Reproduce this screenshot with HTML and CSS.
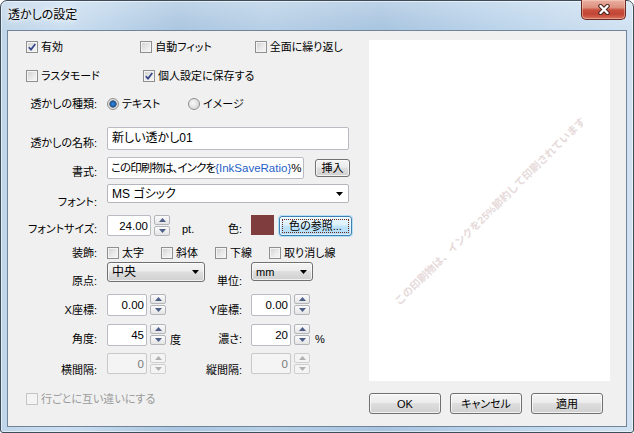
FILE: index.html
```html
<!DOCTYPE html>
<html lang="ja">
<head>
<meta charset="utf-8">
<title>透かしの設定</title>
<link rel="stylesheet" href="styles.css">
</head>
<body>
<div class="window">
  <div class="titlebar">
    <span class="title">透かしの設定</span>
    <div class="close">
      <svg width="14" height="11" viewBox="0 0 14 11"><path class="x-out" d="M3.5 2L10.5 9M10.5 2L3.5 9"/><path class="x-in" d="M3.5 2L10.5 9M10.5 2L3.5 9"/></svg>
    </div>
  </div>
  <div class="client">
    <div class="form">
      <div class="row r-a checks">
        <div class="cb"><span class="box"><svg width="10" height="10" viewBox="0 0 10 10"><path class="tick" d="M1.8 5.2L4 7.6L8.3 1.9"/></svg></span>有効</div>
        <div class="cb"><span class="box"></span>自動フィット</div>
        <div class="cb"><span class="box"></span>全面に繰り返し</div>
      </div>
      <div class="row r-b checks">
        <div class="cb"><span class="box"></span>ラスタモード</div>
        <div class="cb"><span class="box"><svg width="10" height="10" viewBox="0 0 10 10"><path class="tick" d="M1.8 5.2L4 7.6L8.3 1.9"/></svg></span>個人設定に保存する</div>
      </div>
      <div class="row r-c mid">
        <span class="lbl">透かしの種類:</span>
        <div class="rb first"><span class="rad on"></span>テキスト</div>
        <div class="rb"><span class="rad"></span>イメージ</div>
      </div>
      <div class="row r-name">
        <span class="lbl end">透かしの名称:</span>
        <div class="edit name">新しい透かし01</div>
      </div>
      <div class="row r-fmt">
        <span class="lbl end">書式:</span>
        <div class="edit fmt"><span class="jp">この印刷物は、インクを</span><span class="var">{InkSaveRatio}</span>%</div>
        <div class="btn ins">挿入</div>
      </div>
      <div class="row r-font">
        <span class="lbl end">フォント:</span>
        <div class="combo">MS ゴシック<svg class="arr" width="7" height="4" viewBox="0 0 7 4"><path d="M0 0H7L3.5 4Z"/></svg></div>
      </div>
      <div class="row r-size">
        <span class="lbl end">フォントサイズ:</span>
        <div class="larea">
          <div class="spin wide">
            <div class="sv">24.00</div>
            <div class="sbs"><div class="sb"><svg width="7" height="4" viewBox="0 0 7 4"><path d="M0 4H7L3.5 0Z"/></svg></div><div class="sb"><svg width="7" height="4" viewBox="0 0 7 4"><path d="M0 0H7L3.5 4Z"/></svg></div></div>
          </div>
          <span class="unit pt">pt.</span>
        </div>
        <span class="rlbl end">色:</span>
        <div class="swatch"></div>
        <div class="btn focus"><span class="focusin">色の参照...</span></div>
      </div>
      <div class="row r-deco mid">
        <span class="lbl">装飾:</span>
        <div class="cb deco"><span class="box"></span>太字</div>
        <div class="cb deco"><span class="box"></span>斜体</div>
        <div class="cb deco"><span class="box"></span>下線</div>
        <div class="cb deco"><span class="box"></span>取り消し線</div>
      </div>
      <div class="row r-origin">
        <span class="lbl end">原点:</span>
        <div class="ddl origin">中央<svg class="arr" width="7" height="4" viewBox="0 0 7 4"><path d="M0 0H7L3.5 4Z"/></svg></div>
        <span class="rlbl end">単位:</span>
        <div class="ddl mm">mm<svg class="arr" width="7" height="4" viewBox="0 0 7 4"><path d="M0 0H7L3.5 4Z"/></svg></div>
      </div>
      <div class="row r-xy">
        <span class="lbl end">X座標:</span>
        <div class="larea">
          <div class="spin">
            <div class="sv">0.00</div>
            <div class="sbs"><div class="sb"><svg width="7" height="4" viewBox="0 0 7 4"><path d="M0 4H7L3.5 0Z"/></svg></div><div class="sb"><svg width="7" height="4" viewBox="0 0 7 4"><path d="M0 0H7L3.5 4Z"/></svg></div></div>
          </div>
        </div>
        <span class="rlbl end">Y座標:</span>
        <div class="spin">
          <div class="sv">0.00</div>
          <div class="sbs"><div class="sb"><svg width="7" height="4" viewBox="0 0 7 4"><path d="M0 4H7L3.5 0Z"/></svg></div><div class="sb"><svg width="7" height="4" viewBox="0 0 7 4"><path d="M0 0H7L3.5 4Z"/></svg></div></div>
        </div>
      </div>
      <div class="row r-angle">
        <span class="lbl end">角度:</span>
        <div class="larea">
          <div class="spin">
            <div class="sv">45</div>
            <div class="sbs"><div class="sb"><svg width="7" height="4" viewBox="0 0 7 4"><path d="M0 4H7L3.5 0Z"/></svg></div><div class="sb"><svg width="7" height="4" viewBox="0 0 7 4"><path d="M0 0H7L3.5 4Z"/></svg></div></div>
          </div>
          <span class="unit deg">度</span>
        </div>
        <span class="rlbl end">濃さ:</span>
        <div class="spin">
          <div class="sv">20</div>
          <div class="sbs"><div class="sb"><svg width="7" height="4" viewBox="0 0 7 4"><path d="M0 4H7L3.5 0Z"/></svg></div><div class="sb"><svg width="7" height="4" viewBox="0 0 7 4"><path d="M0 0H7L3.5 4Z"/></svg></div></div>
        </div>
        <span class="unit pct">%</span>
      </div>
      <div class="row r-gap">
        <span class="lbl end">横間隔:</span>
        <div class="larea">
          <div class="spin off">
            <div class="sv">0</div>
            <div class="sbs"><div class="sb"><svg width="7" height="4" viewBox="0 0 7 4"><path d="M0 4H7L3.5 0Z"/></svg></div><div class="sb"><svg width="7" height="4" viewBox="0 0 7 4"><path d="M0 0H7L3.5 4Z"/></svg></div></div>
          </div>
        </div>
        <span class="rlbl end">縦間隔:</span>
        <div class="spin off">
          <div class="sv">0</div>
          <div class="sbs"><div class="sb"><svg width="7" height="4" viewBox="0 0 7 4"><path d="M0 4H7L3.5 0Z"/></svg></div><div class="sb"><svg width="7" height="4" viewBox="0 0 7 4"><path d="M0 0H7L3.5 4Z"/></svg></div></div>
        </div>
      </div>
      <div class="row r-stag checks">
        <div class="cb off"><span class="box"></span>行ごとに互い違いにする</div>
      </div>
    </div>
    <div class="side">
      <div class="preview">
        <span class="wm">この印刷物は、インクを25%節約して印刷されています</span>
      </div>
      <div class="buttons">
        <div class="btn big">OK</div>
        <div class="btn big">キャンセル</div>
        <div class="btn big">適用</div>
      </div>
    </div>
  </div>
</div>
</body>
</html>
```
FILE: styles.css
```css
* { box-sizing: border-box; }
html, body { margin: 0; padding: 0; }
body {
  width: 634px; height: 433px; overflow: hidden; background: #fff;
  font-family: "Liberation Sans", "Noto Sans CJK JP", sans-serif;
  font-size: 11px; line-height: 14px; color: #000;
  font-feature-settings: "palt";
}
.window {
  width: 634px; height: 433px;
  border: 1px solid #3e4c5a; border-radius: 7px 7px 3px 3px;
  background:
    linear-gradient(180deg, rgba(255,255,255,0.25) 0, rgba(255,255,255,0) 30px),
    linear-gradient(90deg, #bfd5e9 0%, #cadef0 10%, #aac6e0 28%, #b6cfe6 42%, #a7c4df 60%, #bad3ea 78%, #d0e2f2 100%);
  box-shadow: inset 0 0 0 1px rgba(255,255,255,0.55);
  display: flex; flex-direction: column;
}
.titlebar { height: 29px; display: flex; align-items: center; padding-left: 7px; flex-shrink: 0; }
.title {
  font-family: "Noto Sans CJK JP", sans-serif; font-size: 12px; line-height: 16px;
  margin-top: -3px;
  text-shadow: 0 0 5px #fff, 0 0 9px rgba(255,255,255,0.9);
}
.close {
  align-self: flex-start; margin: -1px 7px 0 auto; width: 45px; height: 20px;
  border: 1px solid #6a2b24; border-top: none; border-radius: 0 0 5px 5px;
  background: linear-gradient(180deg, #eab1a3 0%, #dd8f7d 40%, #c9503f 52%, #c24535 75%, #d9735d 100%);
  box-shadow: inset 0 0 0 1px rgba(255,215,200,0.45);
  display: flex; align-items: center; justify-content: center;
}
.x-out { stroke: #4b2621; stroke-width: 4.4; fill: none; stroke-linecap: round; }
.x-in { stroke: #fff; stroke-width: 2.4; fill: none; stroke-linecap: round; }

.client {
  margin: 0 6px; height: 397px; flex-shrink: 0;
  border: 1px solid #72849a; background: #f0f0f0; display: flex;
}
.form { width: 361px; flex-shrink: 0; display: flex; flex-direction: column; padding-left: 19px; }
.side { width: 241px; flex-shrink: 0; padding-top: 9px; display: flex; flex-direction: column; }

.row { display: flex; align-items: flex-start; flex-shrink: 0; }
.row.mid { align-items: center; }
.end { align-self: flex-end; }
.lbl { width: 70px; margin-right: 10px; display: flex; justify-content: flex-end; white-space: nowrap; flex-shrink: 0; }
.rlbl { width: 37px; margin-right: 9px; display: flex; justify-content: flex-end; white-space: nowrap; flex-shrink: 0; }
.larea { width: 98px; align-self: stretch; display: flex; align-items: flex-start; flex-shrink: 0; }

.r-a { margin-top: 9px; height: 14px; align-items: center; }
.r-b { margin-top: 15px; height: 14px; align-items: center; }
.r-c { margin-top: 14px; height: 14px; }
.r-name { margin-top: 16px; height: 23px; }
.r-fmt { margin-top: 7px; height: 22px; }
.r-font { margin-top: 5px; height: 25px; }
.r-size { margin-top: 6px; height: 21px; }
.r-deco { margin-top: 10px; height: 13px; }
.r-origin { margin-top: 3px; height: 26px; }
.r-xy { margin-top: 6px; height: 23px; }
.r-angle { margin-top: 7px; height: 23px; }
.r-angle .end { margin-bottom: 1px; }
.r-gap { margin-top: 6px; height: 24px; }
.r-stag { margin-top: 15px; height: 14px; align-items: center; }

.checks { margin-left: -1px; }
.checks .cb { width: 117px; }
.cb { display: flex; align-items: center; white-space: nowrap; }
.cb.deco { width: 54px; }
.cb.off { color: #9a9a9a; }
.box {
  width: 12px; height: 12px; margin-right: 3px; flex-shrink: 0;
  border: 1px solid #8e8f8f;
  background: linear-gradient(135deg, #cfcfcf 0%, #e9e9e9 55%, #f7f7f7 100%);
  box-shadow: inset 0 0 0 1px #f4f4f4;
  display: flex; align-items: center; justify-content: center;
}
.cb.off .box { border-color: #c6c6c6; background: #f4f4f4; box-shadow: none; }
.tick { fill: none; stroke: #33468c; stroke-width: 1.7; }

.rb { display: flex; align-items: center; white-space: nowrap; }
.rb.first { width: 81px; }
.rad {
  width: 12px; height: 12px; border-radius: 50%; margin-right: 3px; flex-shrink: 0;
  border: 1px solid #8e8f8f;
  background: radial-gradient(circle at 40% 40%, #f8f8f8 0, #dadada 6px);
}
.rad.on {
  background: radial-gradient(circle at 50% 50%, #3d8ee0 0, #1559a8 2.6px, #55606a 3.4px, #e6e6e6 4px, #d6d6d6 6px);
}

.edit {
  background: #fff; border: 1px solid #b8bbc1; border-radius: 2px;
  padding: 3px 4px 0; line-height: 14px; white-space: nowrap; overflow: hidden;
}
.edit.name { width: 242px; height: 23px; font-size: 12px; }
.edit.fmt { width: 197px; height: 22px; font-size: 11.5px; padding-left: 3px; }
.jp { letter-spacing: -0.9px; }
.var { color: #1f5fc6; }

.btn {
  border: 1px solid #707070; border-radius: 3px;
  background: linear-gradient(180deg, #f4f4f4 0%, #ececec 45%, #dedede 50%, #d0d0d0 100%);
  box-shadow: inset 0 0 0 1px rgba(255,255,255,0.7);
  display: flex; align-items: center; justify-content: center; white-space: nowrap;
  font-size: 11px;
}
.btn.ins { width: 35px; height: 18px; margin-left: 11px; margin-top: 2px; }
.btn.focus {
  width: 73px; height: 20px; margin-left: 5px; margin-top: 1px; padding: 2px;
  border-color: #3c7fb1;
  background: linear-gradient(180deg, #ebf7fe 0%, #dbf1fd 45%, #c2e6fb 50%, #aedaf4 100%);
  box-shadow: 0 0 0 1px rgba(110,200,250,0.45), inset 0 0 0 1px rgba(255,255,255,0.6);
}
.focusin { flex: 1; align-self: stretch; border: 1px dotted #6b2a22; display: flex; align-items: center; justify-content: center; }
.btn.big { width: 72px; height: 21px; }

.combo {
  width: 242px; height: 19px; background: #fff; border: 1px solid #b3b6bc; border-radius: 2px;
  display: flex; align-items: center; padding: 0 0 0 4px; font-size: 12px; white-space: nowrap;
}
.arr { margin-left: auto; margin-right: 5px; fill: #000; flex-shrink: 0; }
.ddl {
  height: 20px; border: 1px solid #707070; border-radius: 3px;
  background: linear-gradient(180deg, #f4f4f4 0%, #ececec 45%, #dedede 50%, #d0d0d0 100%);
  box-shadow: inset 0 0 0 1px rgba(255,255,255,0.7);
  display: flex; align-items: flex-start; padding: 2px 0 0 4px; white-space: nowrap;
}
.ddl .arr { align-self: center; margin-top: -2px; }
.ddl.origin { width: 98px; font-size: 12px; }
.ddl.mm { width: 62px; height: 19px; }

.spin { display: flex; height: 22px; flex-shrink: 0; }
.r-size .spin { height: 21px; }
.r-gap .spin { height: 21px; }
.sv {
  width: 40px; height: 100%; background: #fff; border: 1px solid #b8bbc1; border-radius: 2px;
  text-align: right; padding: 2px 2px 0 0; line-height: 16px; font-size: 11.5px;
}
.spin.wide .sv { width: 44px; }
.sbs { width: 16px; margin-left: 3px; display: flex; flex-direction: column; gap: 1px; }
.sb {
  height: 10px; border: 1px solid #b2b5ba; border-radius: 2px;
  background: linear-gradient(180deg, #fbfbfb, #e4e4e4);
  display: flex; align-items: center; justify-content: center;
}
.sb svg { fill: #4d5f88; }
.spin.off .sv { background: #f4f4f4; border-color: #c8c8c8; color: #7a7a7a; }
.spin.off .sb { border-color: #cfcfcf; background: #f4f4f4; }
.spin.off .sb svg { fill: #b0b0b0; }

.unit { align-self: flex-end; white-space: nowrap; }
.unit.pt { margin-left: 12px; }
.unit.deg { margin-left: 4px; }
.unit.pct { margin-left: 5px; margin-bottom: 1px; }

.swatch { width: 23px; height: 20px; background: #7f3e3d; flex-shrink: 0; }

.preview {
  height: 341px; background: #fff; flex-shrink: 0;
  display: flex; align-items: center; justify-content: center; overflow: hidden;
}
.wm {
  transform: rotate(-44.5deg); white-space: nowrap; font-size: 10.5px; font-weight: bold;
  color: #e6dada; font-feature-settings: normal;
}
.buttons { display: flex; gap: 9px; margin-top: 12px; }
```
